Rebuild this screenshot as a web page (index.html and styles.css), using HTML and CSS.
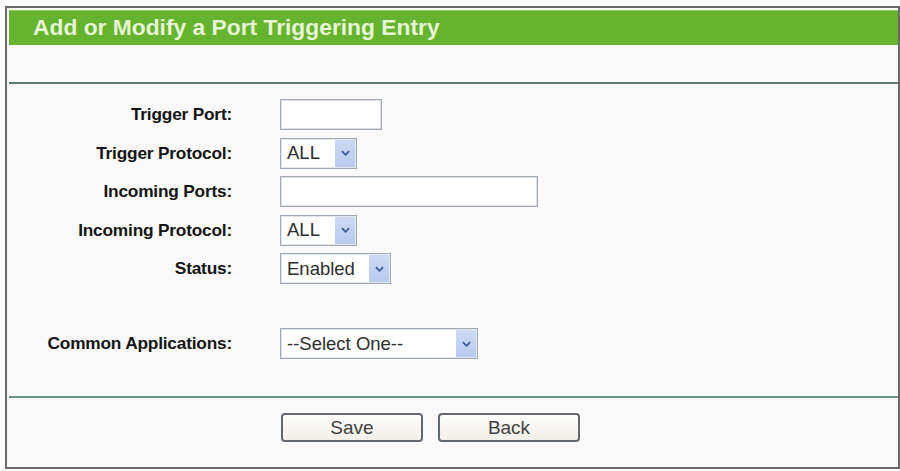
FILE: index.html
```html
<!DOCTYPE html>
<html>
<head>
<meta charset="utf-8">
<link rel="stylesheet" href="styles.css">
</head>
<body>
<div class="panel">
  <div class="head">Add or Modify a Port Triggering Entry</div>
  <div class="blank"></div>
  <div class="rule"></div>
  <div class="form">
    <div class="row">
      <label class="lbl">Trigger Port:</label>
      <div class="field"><div class="input w-port"></div></div>
    </div>
    <div class="row">
      <label class="lbl">Trigger Protocol:</label>
      <div class="field"><div class="select w-all"><span class="val">ALL</span><span class="arrow"><svg viewBox="0 0 10 6" width="9" height="6"><path d="M1 1 L5 5 L9 1" fill="none" stroke="#3c5a9c" stroke-width="2"/></svg></span></div></div>
    </div>
    <div class="row">
      <label class="lbl">Incoming Ports:</label>
      <div class="field"><div class="input w-ports"></div></div>
    </div>
    <div class="row">
      <label class="lbl">Incoming Protocol:</label>
      <div class="field"><div class="select w-all"><span class="val">ALL</span><span class="arrow"><svg viewBox="0 0 10 6" width="9" height="6"><path d="M1 1 L5 5 L9 1" fill="none" stroke="#3c5a9c" stroke-width="2"/></svg></span></div></div>
    </div>
    <div class="row">
      <label class="lbl">Status:</label>
      <div class="field"><div class="select w-status"><span class="val">Enabled</span><span class="arrow"><svg viewBox="0 0 10 6" width="9" height="6"><path d="M1 1 L5 5 L9 1" fill="none" stroke="#3c5a9c" stroke-width="2"/></svg></span></div></div>
    </div>
    <div class="row row-apps">
      <label class="lbl">Common Applications:</label>
      <div class="field"><div class="select w-apps"><span class="val">--Select One--</span><span class="arrow"><svg viewBox="0 0 10 6" width="9" height="6"><path d="M1 1 L5 5 L9 1" fill="none" stroke="#3c5a9c" stroke-width="2"/></svg></span></div></div>
    </div>
  </div>
  <div class="rule rule2"></div>
  <div class="buttons">
    <button class="btn">Save</button>
    <button class="btn">Back</button>
  </div>
</div>
</body>
</html>
```

FILE: styles.css
```css
html, body {
  margin: 0;
  padding: 0;
  background: #fdfdfd;
}
body {
  font-family: "Liberation Sans", Arial, sans-serif;
}
.panel {
  margin: 6px 2px 0 5px;
  width: 889px;
  height: 457px;
  border: 2px solid #6a6a6a;
  background: #f8f9f8;
  padding: 2px 0 0 2px;
  display: flex;
  flex-direction: column;
}
.head {
  height: 35px;
  background: #66b32f;
  border-top: 1px solid #8ccb5c;
  box-sizing: border-box;
  color: #e6f5d4;
  font-size: 22.8px;
  font-weight: bold;
  line-height: 33px;
  padding-left: 24px;
}
.blank {
  height: 37px;
}
.rule {
  height: 2px;
  background: #5e7872;
}
.rule2 {
  background: #6c9385;
}
.form {
  padding: 15px 0 37px 0;
  display: flex;
  flex-direction: column;
  gap: 7.5px;
}
.row {
  display: grid;
  grid-template-columns: 223px 1fr;
  column-gap: 48px;
  align-items: center;
  height: 31px;
}
.row-apps {
  margin-top: 36.5px;
}
.lbl {
  text-align: right;
  font-size: 17.3px;
  font-weight: bold;
  color: #151515;
  letter-spacing: -0.2px;
}
.field {
  display: flex;
}
.input {
  height: 31px;
  box-sizing: border-box;
  border: 1px solid #a3aab2;
  box-shadow: inset 0 0 0 1px #dde1e5;
  background: #ffffff;
}
.w-port { width: 102px; }
.w-ports { width: 258px; }
.select {
  height: 31px;
  box-sizing: border-box;
  border: 1px solid #a0a9b6;
  box-shadow: inset 0 0 0 1px #e3e7ec;
  background: #ffffff;
  display: flex;
  align-items: center;
  justify-content: space-between;
  padding: 2px 1px 2px 6px;
}
.w-all { width: 77px; }
.w-status { width: 111px; }
.w-apps { width: 198px; }
.val {
  font-size: 18.5px;
  color: #2e2e2e;
  white-space: nowrap;
}
.arrow {
  width: 20px;
  height: 27px;
  background: linear-gradient(#ccdaf5, #b8caee);
  display: flex;
  align-items: center;
  justify-content: center;
}
.buttons {
  display: flex;
  gap: 15px;
  padding: 15px 0 0 272px;
}
.btn {
  width: 142px;
  height: 29px;
  border: 2px solid #62686d;
  border-radius: 4px;
  background: linear-gradient(#fdfdfd, #f1efe9);
  font-family: "Liberation Sans", Arial, sans-serif;
  font-size: 19px;
  color: #404040;
  padding: 0;
}
```
